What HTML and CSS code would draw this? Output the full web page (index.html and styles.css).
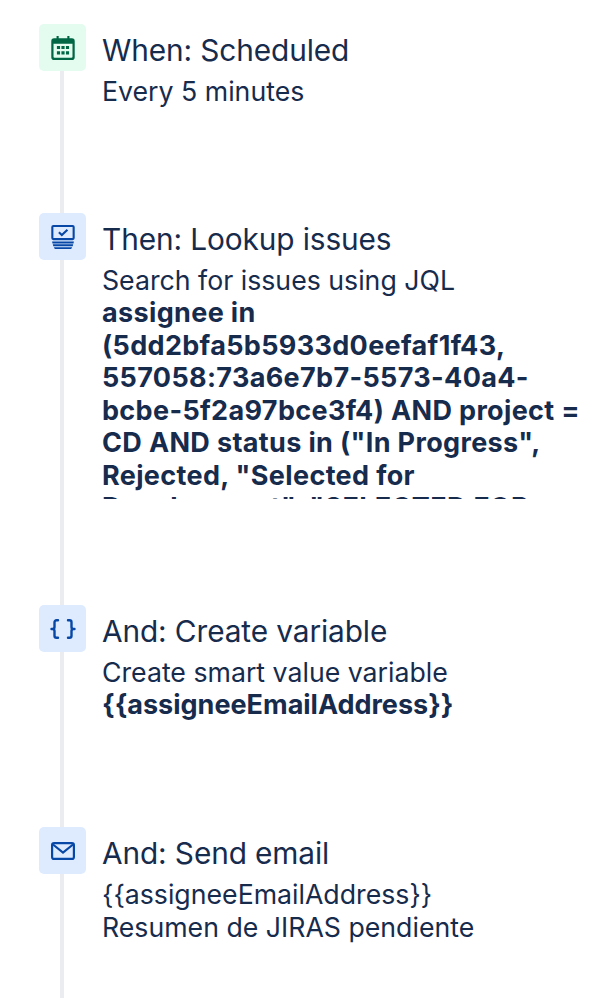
FILE: index.html
```html
<!DOCTYPE html>
<html lang="en">
<head>
<meta charset="utf-8">
<title>Automation rule</title>
<link rel="stylesheet" href="styles.css">
</head>
<body>
<main class="timeline">
  <section class="step step-when">
    <div class="rail">
      <div class="badge badge-green">
        <svg class="icon" viewBox="2 1.500 20 20.500"><path fill="#006644" fill-rule="evenodd" d="M6.500 1.500h1.800v2h7.400v-2h1.800v2h2.100A2.400 2.400 0 0 1 22 5.900v13.700a2.400 2.400 0 0 1-2.400 2.400H4.400A2.400 2.400 0 0 1 2 19.600V5.900a2.400 2.400 0 0 1 2.400-2.400h2.100zM3.900 8.200v11a.9.9 0 0 0 .9.900h14.400a.9.9 0 0 0 .9-.900v-11zM6.800 10h2.700v2.700H6.800zm3.850 0h2.700v2.700h-2.700zm3.850 0h2.700v2.700h-2.700zM6.800 14.500h2.700v2.700H6.800zm3.850 0h2.700v2.700h-2.700zm3.850 0h2.700v2.700h-2.700z"/></svg>
      </div>
      <div class="stem"></div>
    </div>
    <div class="content">
      <h2 class="title">When: Scheduled</h2>
      <p class="text">Every 5 minutes</p>
    </div>
  </section>
  <section class="step step-lookup">
    <div class="rail">
      <div class="badge badge-blue">
        <svg class="icon" viewBox="2 1.500 20 20.500"><path fill="#0747A6" fill-rule="evenodd" d="M3.800 1.500h16.400A1.800 1.800 0 0 1 22 3.300v9.400a1.800 1.800 0 0 1-1.800 1.800H3.800A1.800 1.800 0 0 1 2 12.700V3.300a1.800 1.800 0 0 1 1.800-1.800zM3.800 3.300v9.400h16.400V3.300zM2.700 15.700h18.600l-.3 1.500H3zM3.300 18h17.400l-.4 1.600H3.700zM4.200 20.400h15.600l-.8 1.600H5z"/><path fill="none" stroke="#0747A6" stroke-width="1.800" d="M8.500 7.700l2.500 2.300 4.800-4.400"/></svg>
      </div>
      <div class="stem"></div>
    </div>
    <div class="content">
      <h2 class="title">Then: Lookup issues</h2>
      <p class="text">Search for issues using JQL</p>
      <p class="text text-bold clipped">assignee in (5dd2bfa5b5933d0eefaf1f43, 557058:73a6e7b7-5573-40a4-bcbe-5f2a97bce3f4) AND project = CD AND status in ("In Progress", Rejected, "Selected for Development", "SELECTED FOR DEVELOPMENT")</p>
    </div>
  </section>
  <section class="step step-variable">
    <div class="rail">
      <div class="badge badge-blue">
        <svg class="icon-braces" viewBox="0 0 26 20"><path fill="none" stroke="#0747A6" stroke-width="2.400" stroke-linecap="round" stroke-linejoin="round" d="M8 1.200H6.500A2 2 0 0 0 4.500 3.200v4.800A2 2 0 0 1 2.500 10h-1h1a2 2 0 0 1 2 2v4.800a2 2 0 0 0 2 2H8M18 1.200h1.500a2 2 0 0 1 2 2v4.800a2 2 0 0 0 2 2h1h-1a2 2 0 0 0-2 2v4.800a2 2 0 0 1-2 2H18"/></svg>
      </div>
      <div class="stem"></div>
    </div>
    <div class="content">
      <h2 class="title">And: Create variable</h2>
      <p class="text">Create smart value variable</p>
      <p class="text text-bold">{{assigneeEmailAddress}}</p>
    </div>
  </section>
  <section class="step step-email">
    <div class="rail">
      <div class="badge badge-blue">
        <svg class="icon-mail" viewBox="0 0 24 18"><rect x="1.100" y="1.100" width="21.800" height="15.800" rx="2" fill="none" stroke="#0747A6" stroke-width="2.200"/><path fill="none" stroke="#0747A6" stroke-width="2.200" d="M2 2.500l10 8 10-8"/></svg>
      </div>
      <div class="stem"></div>
    </div>
    <div class="content">
      <h2 class="title">And: Send email</h2>
      <p class="text">{{assigneeEmailAddress}}</p>
      <p class="text">Resumen de JIRAS pendiente</p>
    </div>
  </section>
</main>
</body>
</html>
```
FILE: styles.css
```css
html, body {
  margin: 0;
  padding: 0;
  background: #fff;
}
body {
  height: 998px;
  overflow: hidden;
  font-family: Inter, "Liberation Sans", sans-serif;
  color: #172B4D;
}
.timeline {
  display: flex;
  flex-direction: column;
  padding: 24px 0 0 39px;
}
.step {
  display: flex;
  gap: 16px;
}
.step-when { height: 189px; }
.step-lookup { height: 392px; }
.step-variable { height: 222px; }
.step-email { height: 171px; }
.rail {
  display: flex;
  flex-direction: column;
  width: 47px;
  flex: none;
}
.badge {
  width: 47px;
  height: 47px;
  border-radius: 5px;
  display: flex;
  align-items: center;
  justify-content: center;
  flex: none;
}
.badge-green { background: #E3FCEF; }
.badge-blue { background: #DEEBFF; }
.icon {
  width: 24px;
  height: 24px;
}
.icon-braces {
  width: 26px;
  height: 20px;
}
.icon-mail {
  width: 24px;
  height: 18px;
}
.stem {
  flex: 1;
  width: 4px;
  margin-left: 21px;
  background: #EBECF0;
}
.content {
  width: 486px;
}
.title {
  margin: 6px 0 5px;
  font-size: 29.800px;
  line-height: 40px;
  font-weight: 400;
  letter-spacing: -0.1px;
}
.text {
  margin: 0;
  font-size: 26.700px;
  line-height: 32.500px;
  font-weight: 400;
}
.text-bold {
  font-size: 27px;
  font-weight: 700;
}
.clipped {
  height: 201.500px;
  overflow: hidden;
  letter-spacing: 0.35px;
  padding-top: 0.500px;
}
```
